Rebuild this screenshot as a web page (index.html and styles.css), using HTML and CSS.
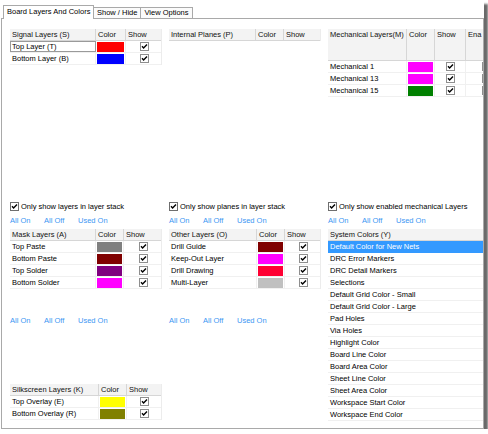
FILE: index.html
```html
<!DOCTYPE html>
<html>
<head>
<meta charset="utf-8">
<link rel="stylesheet" href="styles.css">
</head>
<body>
<div class="window">
  <div class="tabs">
    <div class="tab-lead"></div>
    <div class="tab active">Board Layers And Colors</div>
    <div class="tab">Show / Hide</div>
    <div class="tab">View Options</div>
    <div class="tab-fill"></div>
  </div>
  <div class="panel">
    <div class="grid">
      <!-- top row -->
      <div class="top">
        <div class="tbl t-sig">
          <div class="tr th"><div>Signal Layers (S)</div><div>Color</div><div>Show</div></div>
          <div class="tr"><div class="focus">Top Layer (T)</div><div class="swc"><div class="sw red"></div></div><div class="ckc"><svg class="ck" viewBox="0 0 9 9"><rect x="0.5" y="0.5" width="8" height="8" fill="#fff" stroke="#8e8e8e"/><path d="M2 4.3 L3.6 6 L7 2.5" fill="none" stroke="#000" stroke-width="1.4"/></svg></div></div>
          <div class="tr"><div>Bottom Layer (B)</div><div class="swc"><div class="sw blue"></div></div><div class="ckc"><svg class="ck" viewBox="0 0 9 9"><rect x="0.5" y="0.5" width="8" height="8" fill="#fff" stroke="#8e8e8e"/><path d="M2 4.3 L3.6 6 L7 2.5" fill="none" stroke="#000" stroke-width="1.4"/></svg></div></div>
        </div>
      </div>
      <div class="top">
        <div class="tbl t-int">
          <div class="tr th"><div>Internal Planes (P)</div><div>Color</div><div>Show</div></div>
        </div>
      </div>
      <div class="top">
        <div class="tbl t-mech">
          <div class="tr th tall"><div>Mechanical Layers(M)</div><div>Color</div><div>Show</div><div>Ena</div></div>
          <div class="tr"><div>Mechanical 1</div><div class="swc"><div class="sw magenta"></div></div><div class="ckc"><svg class="ck" viewBox="0 0 9 9"><rect x="0.5" y="0.5" width="8" height="8" fill="#fff" stroke="#8e8e8e"/><path d="M2 4.3 L3.6 6 L7 2.5" fill="none" stroke="#000" stroke-width="1.4"/></svg></div><div class="ckc"><svg class="ck" viewBox="0 0 9 9"><rect x="0.5" y="0.5" width="8" height="8" fill="#fff" stroke="#8e8e8e"/><path d="M2 4.3 L3.6 6 L7 2.5" fill="none" stroke="#000" stroke-width="1.4"/></svg></div></div>
          <div class="tr"><div>Mechanical 13</div><div class="swc"><div class="sw magenta"></div></div><div class="ckc"><svg class="ck" viewBox="0 0 9 9"><rect x="0.5" y="0.5" width="8" height="8" fill="#fff" stroke="#8e8e8e"/><path d="M2 4.3 L3.6 6 L7 2.5" fill="none" stroke="#000" stroke-width="1.4"/></svg></div><div class="ckc"><svg class="ck" viewBox="0 0 9 9"><rect x="0.5" y="0.5" width="8" height="8" fill="#fff" stroke="#8e8e8e"/><path d="M2 4.3 L3.6 6 L7 2.5" fill="none" stroke="#000" stroke-width="1.4"/></svg></div></div>
          <div class="tr"><div>Mechanical 15</div><div class="swc"><div class="sw green"></div></div><div class="ckc"><svg class="ck" viewBox="0 0 9 9"><rect x="0.5" y="0.5" width="8" height="8" fill="#fff" stroke="#8e8e8e"/><path d="M2 4.3 L3.6 6 L7 2.5" fill="none" stroke="#000" stroke-width="1.4"/></svg></div><div class="ckc"><svg class="ck" viewBox="0 0 9 9"><rect x="0.5" y="0.5" width="8" height="8" fill="#fff" stroke="#8e8e8e"/><path d="M2 4.3 L3.6 6 L7 2.5" fill="none" stroke="#000" stroke-width="1.4"/></svg></div></div>
        </div>
      </div>

      <!-- checkbox row -->
      <div class="opt"><svg class="ck" viewBox="0 0 9 9"><rect x="0.5" y="0.5" width="8" height="8" fill="#fff" stroke="#6e6e6e"/><path d="M2 4.3 L3.6 6 L7 2.5" fill="none" stroke="#000" stroke-width="1.4"/></svg><span>Only show layers in layer stack</span></div>
      <div class="opt"><svg class="ck" viewBox="0 0 9 9"><rect x="0.5" y="0.5" width="8" height="8" fill="#fff" stroke="#6e6e6e"/><path d="M2 4.3 L3.6 6 L7 2.5" fill="none" stroke="#000" stroke-width="1.4"/></svg><span>Only show planes in layer stack</span></div>
      <div class="opt"><svg class="ck" viewBox="0 0 9 9"><rect x="0.5" y="0.5" width="8" height="8" fill="#fff" stroke="#6e6e6e"/><path d="M2 4.3 L3.6 6 L7 2.5" fill="none" stroke="#000" stroke-width="1.4"/></svg><span>Only show enabled mechanical Layers</span></div>

      <!-- link row -->
      <div class="links"><span>All On</span><span>All Off</span><span>Used On</span></div>
      <div class="links"><span>All On</span><span>All Off</span><span>Used On</span></div>
      <div class="links"><span>All On</span><span>All Off</span><span>Used On</span></div>

      <!-- bottom column 1 -->
      <div class="bottom">
        <div class="tbl t-mask">
          <div class="tr th"><div>Mask Layers (A)</div><div>Color</div><div>Show</div></div>
          <div class="tr"><div>Top Paste</div><div class="swc"><div class="sw gray"></div></div><div class="ckc"><svg class="ck" viewBox="0 0 9 9"><rect x="0.5" y="0.5" width="8" height="8" fill="#fff" stroke="#8e8e8e"/><path d="M2 4.3 L3.6 6 L7 2.5" fill="none" stroke="#000" stroke-width="1.4"/></svg></div></div>
          <div class="tr"><div>Bottom Paste</div><div class="swc"><div class="sw maroon"></div></div><div class="ckc"><svg class="ck" viewBox="0 0 9 9"><rect x="0.5" y="0.5" width="8" height="8" fill="#fff" stroke="#8e8e8e"/><path d="M2 4.3 L3.6 6 L7 2.5" fill="none" stroke="#000" stroke-width="1.4"/></svg></div></div>
          <div class="tr"><div>Top Solder</div><div class="swc"><div class="sw purple"></div></div><div class="ckc"><svg class="ck" viewBox="0 0 9 9"><rect x="0.5" y="0.5" width="8" height="8" fill="#fff" stroke="#8e8e8e"/><path d="M2 4.3 L3.6 6 L7 2.5" fill="none" stroke="#000" stroke-width="1.4"/></svg></div></div>
          <div class="tr"><div>Bottom Solder</div><div class="swc"><div class="sw magenta"></div></div><div class="ckc"><svg class="ck" viewBox="0 0 9 9"><rect x="0.5" y="0.5" width="8" height="8" fill="#fff" stroke="#8e8e8e"/><path d="M2 4.3 L3.6 6 L7 2.5" fill="none" stroke="#000" stroke-width="1.4"/></svg></div></div>
        </div>
        <div class="links links-2"><span>All On</span><span>All Off</span><span>Used On</span></div>
        <div class="tbl t-silk">
          <div class="tr th"><div>Silkscreen Layers (K)</div><div>Color</div><div>Show</div></div>
          <div class="tr"><div>Top Overlay (E)</div><div class="swc"><div class="sw yellow"></div></div><div class="ckc"><svg class="ck" viewBox="0 0 9 9"><rect x="0.5" y="0.5" width="8" height="8" fill="#fff" stroke="#8e8e8e"/><path d="M2 4.3 L3.6 6 L7 2.5" fill="none" stroke="#000" stroke-width="1.4"/></svg></div></div>
          <div class="tr"><div>Bottom Overlay (R)</div><div class="swc"><div class="sw olive"></div></div><div class="ckc"><svg class="ck" viewBox="0 0 9 9"><rect x="0.5" y="0.5" width="8" height="8" fill="#fff" stroke="#8e8e8e"/><path d="M2 4.3 L3.6 6 L7 2.5" fill="none" stroke="#000" stroke-width="1.4"/></svg></div></div>
        </div>
      </div>

      <!-- bottom column 2 -->
      <div class="bottom">
        <div class="tbl t-other">
          <div class="tr th"><div>Other Layers (O)</div><div>Color</div><div>Show</div></div>
          <div class="tr"><div>Drill Guide</div><div class="swc"><div class="sw maroon"></div></div><div class="ckc"><svg class="ck" viewBox="0 0 9 9"><rect x="0.5" y="0.5" width="8" height="8" fill="#fff" stroke="#8e8e8e"/><path d="M2 4.3 L3.6 6 L7 2.5" fill="none" stroke="#000" stroke-width="1.4"/></svg></div></div>
          <div class="tr"><div>Keep-Out Layer</div><div class="swc"><div class="sw magenta"></div></div><div class="ckc"><svg class="ck" viewBox="0 0 9 9"><rect x="0.5" y="0.5" width="8" height="8" fill="#fff" stroke="#8e8e8e"/><path d="M2 4.3 L3.6 6 L7 2.5" fill="none" stroke="#000" stroke-width="1.4"/></svg></div></div>
          <div class="tr"><div>Drill Drawing</div><div class="swc"><div class="sw rose"></div></div><div class="ckc"><svg class="ck" viewBox="0 0 9 9"><rect x="0.5" y="0.5" width="8" height="8" fill="#fff" stroke="#8e8e8e"/><path d="M2 4.3 L3.6 6 L7 2.5" fill="none" stroke="#000" stroke-width="1.4"/></svg></div></div>
          <div class="tr"><div>Multi-Layer</div><div class="swc"><div class="sw silver"></div></div><div class="ckc"><svg class="ck" viewBox="0 0 9 9"><rect x="0.5" y="0.5" width="8" height="8" fill="#fff" stroke="#8e8e8e"/><path d="M2 4.3 L3.6 6 L7 2.5" fill="none" stroke="#000" stroke-width="1.4"/></svg></div></div>
        </div>
        <div class="links links-2"><span>All On</span><span>All Off</span><span>Used On</span></div>
      </div>

      <!-- bottom column 3 -->
      <div class="bottom">
        <div class="tbl t-sys">
          <div class="tr th"><div>System Colors (Y)</div></div>
          <div class="tr sel"><div>Default Color for New Nets</div></div>
          <div class="tr"><div>DRC Error Markers</div></div>
          <div class="tr"><div>DRC Detail Markers</div></div>
          <div class="tr"><div>Selections</div></div>
          <div class="tr"><div>Default Grid Color - Small</div></div>
          <div class="tr"><div>Default Grid Color - Large</div></div>
          <div class="tr"><div>Pad Holes</div></div>
          <div class="tr"><div>Via Holes</div></div>
          <div class="tr"><div>Highlight Color</div></div>
          <div class="tr"><div>Board Line Color</div></div>
          <div class="tr"><div>Board Area Color</div></div>
          <div class="tr"><div>Sheet Line Color</div></div>
          <div class="tr"><div>Sheet Area Color</div></div>
          <div class="tr"><div>Workspace Start Color</div></div>
          <div class="tr"><div>Workspace End Color</div></div>
        </div>
      </div>
    </div>
  </div>
</div>
</body>
</html>
```

FILE: styles.css
```css
html, body {
  margin: 0;
  padding: 0;
  background: #ffffff;
}

body {
  font-family: "Liberation Sans", Arial, sans-serif;
  font-size: 7.5px;
  color: #000;
}

.window {
  width: 484px;
  height: 429px;
  box-sizing: border-box;
  padding: 5px 0 0 1px;
  background: #fff;
  box-shadow: 4px 4px 2px #6a6a6a;
}

/* ---------- tabs ---------- */
.tabs {
  display: flex;
  align-items: flex-end;
  height: 14px;
}

.tab-lead {
  width: 2px;
  height: 0;
  border-bottom: 1px solid #a9a9a9;
}

.tab {
  box-sizing: border-box;
  height: 12px;
  padding: 0 3px;
  line-height: 10px;
  border: 1px solid #a9a9a9;
  border-right: none;
  background: #fbfbfb;
  white-space: nowrap;
}

.tab:nth-child(4) {
  border-right: 1px solid #a9a9a9;
}

.tab.active {
  height: 14px;
  line-height: 12px;
  border-bottom: none;
  border-right: 1px solid #a9a9a9;
  background: #fff;
  width: 91px;
}

.tab.active + .tab {
  border-left: none;
}

.tab-fill {
  flex: 1;
  height: 0;
  border-bottom: 1px solid #a9a9a9;
}

/* ---------- panel ---------- */
.panel {
  box-sizing: border-box;
  width: 483px;
  height: 410px;
  border: 1px solid #a9a9a9;
  border-top: none;
  padding: 10px 0 0 8px;
  overflow: hidden;
}

.grid {
  display: grid;
  grid-template-columns: 152px 152px 160px;
  column-gap: 7px;
  grid-template-rows: 171px 15px 14px auto;
}

/* ---------- tables ---------- */
.tbl {
  border-right: 1px solid #ececec;
}

.tr {
  display: grid;
  box-sizing: border-box;
  height: 12px;
  border-bottom: 1px solid #f0f0f0;
}

.tr > div {
  box-sizing: border-box;
  border-right: 1px solid #f0f0f0;
  padding-left: 2px;
  line-height: 11px;
  white-space: nowrap;
  overflow: hidden;
}

.tr > div:last-child {
  border-right: none;
}

.th {
  background: #f3f3f3;
  border-bottom: 1px solid #d6d6d6;
  color: #111;
}

.th > div {
  border-right-color: #d6d6d6;
}

.th.tall {
  height: 32px;
}

.focus {
  outline: 1px solid #9a9a9a;
  outline-offset: -1px;
}

.t-sig .tr { grid-template-columns: 86px 30px 36px; }
.t-int .tr { grid-template-columns: 87px 28px 37px; }
.t-mech { border-right: none; }
.t-mech .tr { grid-template-columns: 79px 28px 31px 40px; }
.t-mask .tr { grid-template-columns: 86px 28px 38px; }
.t-other .tr { grid-template-columns: 88px 28px 36px; }
.t-silk .tr { grid-template-columns: 89px 28px 35px; }
.t-sys { border-right: none; }
.t-sys .tr { grid-template-columns: 1fr; }

.t-sys .tr.sel {
  background: #3399ff;
  color: #fff;
  border-bottom-color: #3399ff;
}

.swc {
  padding: 0 1px 0 1px !important;
}

.sw {
  height: 10px;
  margin-top: 1px;
}

.ckc {
  display: flex;
  justify-content: center;
  align-items: center;
  padding-left: 0 !important;
}

.ck {
  width: 9px;
  height: 9px;
  display: block;
}

.red { background: #ff0000; }
.blue { background: #0000ff; }
.magenta { background: #ff00ff; }
.green { background: #008000; }
.gray { background: #808080; }
.maroon { background: #800000; }
.purple { background: #800080; }
.rose { background: #ff0033; }
.silver { background: #c0c0c0; }
.yellow { background: #ffff00; }
.olive { background: #808000; }

/* ---------- option rows ---------- */
.opt {
  display: flex;
  align-items: center;
  height: 12px;
  white-space: nowrap;
}

.opt .ck {
  margin-right: 2px;
}

.links {
  display: grid;
  grid-template-columns: 34px 34px auto;
  height: 12px;
  line-height: 12px;
  color: #3b97f3;
  white-space: nowrap;
}

.links-2 {
  margin-top: 26px;
}

.t-silk {
  margin-top: 57px;
}

.bottom {
  display: flex;
  flex-direction: column;
  align-items: stretch;
}
```
